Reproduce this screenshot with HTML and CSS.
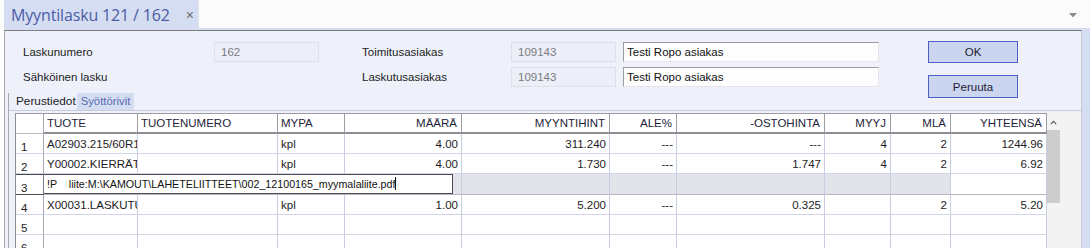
FILE: index.html
```html
<!DOCTYPE html>
<html lang="fi">
<head>
    <meta charset="UTF-8">
    <meta name="viewport" content="width=device-width, initial-scale=1.0">
    <title>Myyntilasku 121 / 162</title>
    <link rel="stylesheet" href="styles.css">
</head>
<body>
    <div class="tabbar">
        <div class="doc-tab">
            <span class="doc-title">Myyntilasku 121 / 162</span>
            <span class="doc-close">&times;</span>
        </div>
        <svg class="tab-menu" width="8" height="5" viewBox="0 0 8 5"><path d="M0 0 H8 L4 4.5 Z" fill="#8c8c8c"/></svg>
    </div>

    <div class="window">
        <div class="frame">
            <div class="head">
                <div class="fields">
                    <label>Laskunumero</label>
                    <div class="field ro">162</div>
                    <label>Toimitusasiakas</label>
                    <div class="field ro">109143</div>
                    <div class="field text">Testi Ropo asiakas</div>

                    <label>Sähköinen lasku</label>
                    <div></div>
                    <label>Laskutusasiakas</label>
                    <div class="field ro">109143</div>
                    <div class="field text">Testi Ropo asiakas</div>
                </div>
                <div class="actions">
                    <button class="btn ok">OK</button>
                    <button class="btn cancel">Peruuta</button>
                </div>
            </div>

            <div class="pages">
                <div class="page-tabs">
                    <span class="page-tab">Perustiedot</span>
                    <span class="page-tab active">Syöttörivit</span>
                </div>
                <div class="page">
                    <table class="rows">
                        <thead>
                            <tr>
                                <th class="num-col"></th>
                                <th class="w-tuote">TUOTE</th>
                                <th class="w-tnro">TUOTENUMERO</th>
                                <th class="w-mypa">MYPA</th>
                                <th class="w-maara r">MÄÄRÄ</th>
                                <th class="w-hinta r">MYYNTIHINT</th>
                                <th class="w-ale r">ALE%</th>
                                <th class="w-osto r">-OSTOHINTA</th>
                                <th class="w-myyj r">MYYJ</th>
                                <th class="w-mla r">MLÄ</th>
                                <th class="w-yht r">YHTEENSÄ</th>
                            </tr>
                        </thead>
                        <tbody>
                            <tr>
                                <td class="num-col">1</td>
                                <td>A02903.215/60R1</td>
                                <td></td>
                                <td>kpl</td>
                                <td class="r">4.00</td>
                                <td class="r">311.240</td>
                                <td class="r">---</td>
                                <td class="r">---</td>
                                <td class="r">4</td>
                                <td class="r">2</td>
                                <td class="r">1244.96</td>
                            </tr>
                            <tr>
                                <td class="num-col">2</td>
                                <td>Y00002.KIERRÄTYS</td>
                                <td></td>
                                <td>kpl</td>
                                <td class="r">4.00</td>
                                <td class="r">1.730</td>
                                <td class="r">---</td>
                                <td class="r">1.747</td>
                                <td class="r">4</td>
                                <td class="r">2</td>
                                <td class="r">6.92</td>
                            </tr>
                            <tr class="editing">
                                <td class="num-col">3</td>
                                <td class="edit" colspan="4"><div class="editor">!P    liite:M:\KAMOUT\LAHETELIITTEET\002_12100165_myymalaliite.pdf<span class="caret"></span></div></td>
                                <td class="off"></td>
                                <td class="off"></td>
                                <td class="off"></td>
                                <td class="off"></td>
                                <td class="off"></td>
                                <td></td>
                            </tr>
                            <tr>
                                <td class="num-col">4</td>
                                <td>X00031.LASKUTUS</td>
                                <td></td>
                                <td>kpl</td>
                                <td class="r">1.00</td>
                                <td class="r">5.200</td>
                                <td class="r">---</td>
                                <td class="r">0.325</td>
                                <td class="r"></td>
                                <td class="r">2</td>
                                <td class="r">5.20</td>
                            </tr>
                            <tr>
                                <td class="num-col">5</td>
                                <td></td><td></td><td></td><td></td><td></td>
                                <td></td><td></td><td></td><td></td><td></td>
                            </tr>
                            <tr>
                                <td class="num-col">6</td>
                                <td></td><td></td><td></td><td></td><td></td>
                                <td></td><td></td><td></td><td></td><td></td>
                            </tr>
                        </tbody>
                    </table>
                    <div class="scrollbar">
                        <div class="sb-up">
                            <svg width="7" height="5" viewBox="0 0 7 5"><path d="M0.8 4.2 L3.5 1.3 L6.2 4.2" fill="none" stroke="#606060" stroke-width="1.2"/></svg>
                        </div>
                        <div class="sb-thumb"></div>
                    </div>
                </div>
            </div>
        </div>
    </div>
</body>
</html>
```
FILE: styles.css
```css
html, body {
    margin: 0;
    height: 248px;
    overflow: hidden;
}
body {
    font-family: "Liberation Sans", Arial, sans-serif;
    font-size: 11.5px;
    color: #1c1c24;
    background-color: #fff;
}

/* document tab strip */
.tabbar {
    height: 28px;
    display: flex;
    align-items: stretch;
    background-color: #fbfbfb;
}
.doc-tab {
    margin-left: 4px;
    width: 195px;
    flex-shrink: 0;
    box-sizing: border-box;
    padding-left: 7px;
    display: flex;
    align-items: center;
    background-color: #d5ddf2;
    border-right: 1px solid #e2e4ea;
    white-space: nowrap;
}
.doc-title {
    font-family: "Open Sans", sans-serif;
    font-size: 16px;
    letter-spacing: -0.15px;
    color: #4a5ca6;
    padding-top: 1px;
}
.doc-close {
    margin-left: 16px;
    font-size: 14px;
    color: #6c6c74;
    padding-top: 2px;
}
.tab-menu {
    margin-left: auto;
    margin-right: 13px;
    align-self: center;
    margin-top: 3px;
}

/* window frame */
.window {
    margin-left: 4px;
    padding: 2px 8px 0 0;
    background-color: #d5ddf2;
    height: 218px;
}
.frame {
    height: 100%;
    background-color: #eef1fa;
    border-top: 1px solid #7c7c80;
    border-left: 1px solid #a4a4aa;
    border-right: 1px solid #c4c8d4;
    display: flex;
    flex-direction: column;
}

/* header fields */
.head {
    display: flex;
    height: 62px;
    box-sizing: border-box;
    padding: 11px 0 0 18px;
}
.fields {
    display: grid;
    grid-template-columns: 191px 148px 149px 112px 256px;
    grid-auto-rows: 20px;
    row-gap: 5px;
    align-items: center;
    align-self: flex-start;
}
.field {
    height: 20px;
    box-sizing: border-box;
    padding: 3px 6px 0;
    line-height: 13px;
}
.field.ro {
    width: 105px;
    color: #7a7a80;
    background-color: #eceff7;
    border: 1px solid #dce0ea;
}
.field.text {
    padding-left: 3px;
    background-color: #fdfdfe;
    border: 1px solid #e4e6ec;
    border-top-color: #9c9ca0;
    border-left-color: #9c9ca0;
    color: #111;
}
.actions {
    margin-left: 49px;
    margin-top: -1px;
    display: flex;
    flex-direction: column;
    align-self: flex-start;
    gap: 12px;
}
.btn {
    width: 90px;
    height: 22px;
    padding: 0;
    font-family: "Liberation Sans", Arial, sans-serif;
    font-size: 11.5px;
    color: #1c1c30;
    background-color: #cbd5f0;
    border: 1px solid #4c5fc2;
}
.btn.cancel {
    height: 23px;
}

/* page tabs */
.pages {
    margin-left: 3px;
    flex: 1;
    display: flex;
    flex-direction: column;
    border-left: 1px solid #a8a8b0;
}
.page-tabs {
    display: flex;
    height: 17px;
    padding-left: 6px;
    border-bottom: 1px solid #c8ccd8;
}
.page-tab {
    padding: 1px 1px 0;
    font-size: 11.8px;
    margin-right: 0;
}
.page-tab.active {
    padding: 2px 4px 0 4px;
    font-size: 11.3px;
    color: #5a6cb0;
    background-color: #d5ddf2;
}
.page {
    flex: 1;
    display: flex;
    align-items: flex-start;
    padding: 2px 0 0 6px;
}

/* rows grid */
.rows {
    table-layout: fixed;
    width: 1031px;
    border-collapse: separate;
    border-spacing: 0;
    border-top: 1px solid #9a9aa0;
    border-left: 1px solid #8e8e94;
    background-color: #fff;
}
.rows th, .rows td {
    box-sizing: border-box;
    padding: 0 3px;
    overflow: hidden;
    white-space: nowrap;
    text-overflow: clip;
}
.rows th {
    height: 20px;
    font-weight: normal;
    text-align: left;
    vertical-align: top;
    padding-top: 3px;
    color: #1e1e38;
    border-right: 1px solid #9e9ea4;
    border-bottom: 2px solid #8e8e94;
}
.rows td {
    height: 19.5px;
    border-right: 1px solid #c8cce0;
    border-bottom: 1px solid #d2d5e6;
    vertical-align: middle;
    padding-top: 1px;
}
.rows .r {
    text-align: right;
}
.rows th.r {
    padding-right: 4px;
}
.rows .num-col {
    width: 28px;
    padding-left: 5px;
    border-right-color: #a8a8b4;
}
.rows td.num-col {
    padding-top: 7px;
    line-height: 12px;
}
.rows th.num-col {
    border-bottom: 1px solid #b8b8c0;
}
.w-tuote { width: 94px; }
.w-tnro { width: 140px; }
.w-mypa { width: 67px; }
.w-maara { width: 117px; }
.w-hinta { width: 148px; }
.w-ale { width: 67px; }
.w-osto { width: 148px; }
.w-myyj { width: 66px; }
.w-mla { width: 60px; }
.w-yht { width: 96px; }

.editing td {
    border-bottom-color: #b4b6c0;
}
.editing td.num-col {
    border-top: 1px solid #4a4a50;
    border-bottom: 1px solid #4a4a50;
    border-right-color: #7a7a80;
}
.rows td.edit {
    padding: 0;
    background-color: #e3e4e9;
}
.editor {
    width: 409px;
    height: 19.5px;
    box-sizing: border-box;
    border: 1px solid #4a4a50;
    border-left: none;
    background-color: #fff;
    padding: 2px 0 0 3px;
    white-space: pre;
    font-size: 10.7px;
    color: #111;
}
.caret {
    display: inline-block;
    width: 1px;
    height: 13px;
    background-color: #111;
    vertical-align: -2px;
}
.rows td.off {
    background-color: #e3e4e9;
}

/* scrollbar */
.scrollbar {
    flex: 1;
    align-self: stretch;
    background-color: #f3f3f4;
}
.sb-up {
    width: 13px;
    height: 17px;
    display: flex;
    justify-content: center;
    align-items: center;
    padding-top: 2px;
    box-sizing: border-box;
}
.sb-thumb {
    width: 13px;
    height: 73px;
    background-color: #cdcdcd;
}
```
